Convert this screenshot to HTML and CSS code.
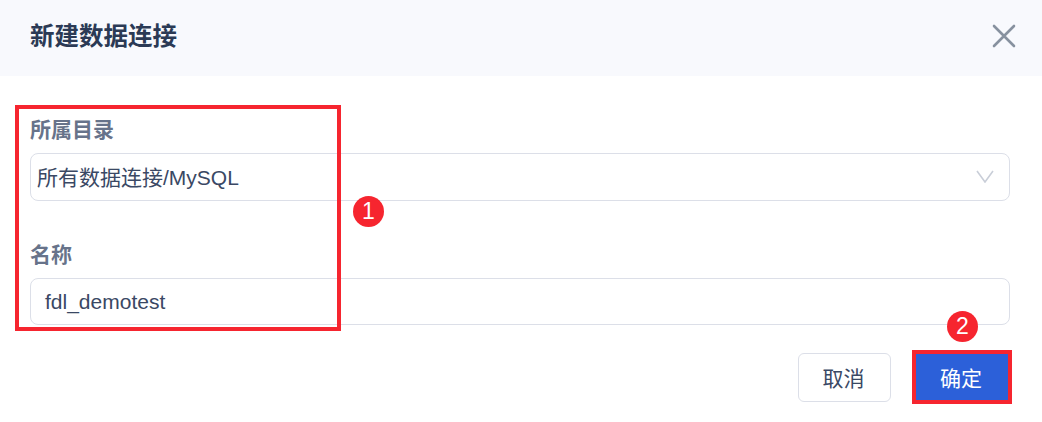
FILE: index.html
```html
<!DOCTYPE html>
<html lang="zh-CN">
<head>
  <meta charset="UTF-8" />
  <title>新建数据连接</title>
  <link rel="stylesheet" href="styles.css">
</head>
<body>

<div class="dialog">
  <header class="dialog-header">
    <h3>新建数据连接</h3>
    <svg class="close" width="24" height="24" viewBox="0 0 24 24">
      <path d="M2 2L22 22M22 2L2 22" fill="none" stroke="#87919f" stroke-width="2.6" stroke-linecap="round"/>
    </svg>
  </header>

  <div class="dialog-body">
    <div class="field">
      <label>所属目录</label>
      <div class="control select">
        <span>所有数据连接/MySQL</span>
        <svg width="18" height="13" viewBox="0 0 18 13">
          <path d="M1 1L9 12L17 1" fill="none" stroke="#c9ced8" stroke-width="1.6"/>
        </svg>
      </div>
    </div>
    <div class="field">
      <label>名称</label>
      <div class="control input">fdl_demotest</div>
    </div>
  </div>

  <footer class="dialog-footer">
    <button class="btn">取消</button>
    <button class="btn primary">确定</button>
  </footer>
</div>

<!-- annotations on top of the screenshot -->
<div class="mark-box"></div>
<div class="mark-num num-1">1</div>
<div class="mark-num num-2">2</div>

</body>
</html>
```

FILE: styles.css
```css
body { font-family: "Liberation Sans", "Noto Sans CJK SC", sans-serif; margin: 0; background: white; color: #3a4864; position: relative; }
.dialog { width: 1042px; height: 422px; overflow: hidden; }
.dialog-header { height: 76px; background: #f8f9fd; display: flex; align-items: center; justify-content: space-between; padding: 0 26px 8px 30px; box-sizing: border-box; }
.dialog-header h3 { margin: 0; font-size: 24.5px; font-weight: bold; color: #2b3a55; }
.close { display: block; margin-top: 3px; }
.dialog-body { padding: 39px 32px 0 30px; }
.field { margin-bottom: 39px; }
.field:last-child { margin-bottom: 0; }
.field label { display: block; font-size: 21px; line-height: 30px; font-weight: bold; color: #67738a; margin-bottom: 8px; }
.control { height: 48px; box-sizing: border-box; border: 1px solid #dcdfe8; border-radius: 8px; font-size: 21px; display: flex; align-items: center; color: #3a4864; }
.select { justify-content: space-between; padding: 0 15px 2px 6px; }
.input { padding-left: 14px; height: 47px; }
.dialog-footer { display: flex; justify-content: flex-end; align-items: center; gap: 21px; padding: 25px 30px 0 0; }
.btn { width: 93px; height: 49px; background: white; border: 1px solid #dcdfe8; border-radius: 6px; font-family: inherit; font-size: 21px; color: #3a4864; padding: 0 2px 0 0; }
.btn.primary { width: 100px; height: 54px; background: #2c60d9; color: white; border: 4px solid #f6252f; border-radius: 0; }
.mark-box { position: absolute; left: 15px; top: 105px; width: 326px; height: 226px; box-sizing: border-box; border: 4px solid #f6252f; }
.mark-num { position: absolute; width: 31px; height: 31px; border-radius: 50%; background: #f6252f; color: white; font-size: 23px; line-height: 31px; text-align: center; }
.num-1 { left: 353px; top: 196px; }
.num-2 { left: 947px; top: 311px; }
```
